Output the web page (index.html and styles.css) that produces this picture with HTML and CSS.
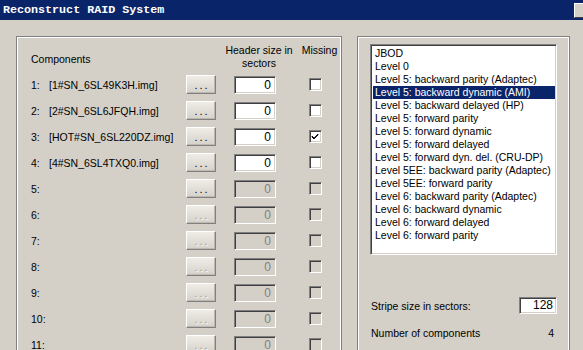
FILE: index.html
```html
<!DOCTYPE html>
<html lang="en">
  <head>
    <meta charset="UTF-8" />
    <title>Reconstruct RAID System</title>
    <link rel="stylesheet" href="styles.css">
  </head>
  <body>
    <div class="titlebar">
      <span class="title">Reconstruct RAID System</span>
      <span class="tb-btn"></span>
    </div>

    <div class="content">
      <div class="frame left-frame">
        <div class="head-row">
          <div class="comp-label">Components</div>
          <div class="hdr-cell hdr-text">Header size in<br />sectors</div>
          <div class="miss-cell">Missing</div>
        </div>

        <div class="row">
          <span class="num">1:</span>
          <span class="name">[1#SN_6SL49K3H.img]</span>
          <button class="browse">...</button>
          <div class="hdr-cell"><div class="edit">0</div></div>
          <div class="miss-cell"><span class="check"></span></div>
        </div>
        <div class="row">
          <span class="num">2:</span>
          <span class="name">[2#SN_6SL6JFQH.img]</span>
          <button class="browse">...</button>
          <div class="hdr-cell"><div class="edit">0</div></div>
          <div class="miss-cell"><span class="check"></span></div>
        </div>
        <div class="row">
          <span class="num">3:</span>
          <span class="name">[HOT#SN_6SL220DZ.img]</span>
          <button class="browse">...</button>
          <div class="hdr-cell"><div class="edit">0</div></div>
          <div class="miss-cell">
            <span class="check">
              <svg width="9" height="9" viewBox="0 0 9 9">
                <path d="M1 4 L3 6 L7 2 L7 3 L3 7 L1 5 Z M1 5 L3 7" fill="#000" stroke="#000" stroke-width="0.8" />
              </svg>
            </span>
          </div>
        </div>
        <div class="row">
          <span class="num">4:</span>
          <span class="name">[4#SN_6SL4TXQ0.img]</span>
          <button class="browse">...</button>
          <div class="hdr-cell"><div class="edit">0</div></div>
          <div class="miss-cell"><span class="check"></span></div>
        </div>
        <div class="row">
          <span class="num">5:</span>
          <span class="name"></span>
          <button class="browse">...</button>
          <div class="hdr-cell"><div class="edit off">0</div></div>
          <div class="miss-cell"><span class="check off"></span></div>
        </div>
        <div class="row">
          <span class="num">6:</span>
          <span class="name"></span>
          <button class="browse off">...</button>
          <div class="hdr-cell"><div class="edit off">0</div></div>
          <div class="miss-cell"><span class="check off"></span></div>
        </div>
        <div class="row">
          <span class="num">7:</span>
          <span class="name"></span>
          <button class="browse off">...</button>
          <div class="hdr-cell"><div class="edit off">0</div></div>
          <div class="miss-cell"><span class="check off"></span></div>
        </div>
        <div class="row">
          <span class="num">8:</span>
          <span class="name"></span>
          <button class="browse off">...</button>
          <div class="hdr-cell"><div class="edit off">0</div></div>
          <div class="miss-cell"><span class="check off"></span></div>
        </div>
        <div class="row">
          <span class="num">9:</span>
          <span class="name"></span>
          <button class="browse off">...</button>
          <div class="hdr-cell"><div class="edit off">0</div></div>
          <div class="miss-cell"><span class="check off"></span></div>
        </div>
        <div class="row">
          <span class="num">10:</span>
          <span class="name"></span>
          <button class="browse off">...</button>
          <div class="hdr-cell"><div class="edit off">0</div></div>
          <div class="miss-cell"><span class="check off"></span></div>
        </div>
        <div class="row">
          <span class="num">11:</span>
          <span class="name"></span>
          <button class="browse off">...</button>
          <div class="hdr-cell"><div class="edit off">0</div></div>
          <div class="miss-cell"><span class="check off"></span></div>
        </div>
      </div>

      <div class="frame right-frame">
        <ul class="listbox">
          <li>JBOD</li>
          <li>Level 0</li>
          <li>Level 5: backward parity (Adaptec)</li>
          <li class="selected">Level 5: backward dynamic (AMI)</li>
          <li>Level 5: backward delayed (HP)</li>
          <li>Level 5: forward parity</li>
          <li>Level 5: forward dynamic</li>
          <li>Level 5: forward delayed</li>
          <li>Level 5: forward dyn. del. (CRU-DP)</li>
          <li>Level 5EE: backward parity (Adaptec)</li>
          <li>Level 5EE: forward parity</li>
          <li>Level 6: backward parity (Adaptec)</li>
          <li>Level 6: backward dynamic</li>
          <li>Level 6: forward delayed</li>
          <li>Level 6: forward parity</li>
        </ul>

        <div class="param-row stripe-row">
          <span>Stripe size in sectors:</span>
          <div class="edit stripe-edit">128</div>
        </div>
        <div class="param-row">
          <span>Number of components</span>
          <span class="count">4</span>
        </div>
      </div>
    </div>
  </body>
</html>
```

FILE: styles.css
```css
* {
  margin: 0;
  padding: 0;
  box-sizing: border-box;
}

body {
  width: 583px;
  height: 350px;
  overflow: hidden;
  background: #d4d0c8;
  font-family: "Liberation Sans", Arial, sans-serif;
  font-size: 10.5px;
  color: #000;
}

.titlebar {
  height: 20px;
  background: #0a246a;
  display: flex;
  justify-content: space-between;
  align-items: flex-start;
  overflow: hidden;
}

.title {
  font-family: "Liberation Mono", "Courier New", monospace;
  font-weight: bold;
  font-size: 11.7px;
  color: #fff;
  padding: 3px 0 0 3px;
  line-height: 14px;
}

.tb-btn {
  width: 10px;
  height: 15px;
  margin-top: 3px;
  margin-right: -1px;
  background: #d4d0c8;
  border-top: 1px solid #fff;
  border-left: 1px solid #fff;
  border-bottom: 1px solid #404040;
}

.content {
  display: flex;
  gap: 15px;
  padding: 16px 0 0 16px;
}

.frame {
  height: 330px;
  border: 1px solid #808080;
  box-shadow: inset 1px 1px 0 #fff, inset -1px 0 0 #fff;
}

.left-frame {
  width: 326px;
  padding: 7px 0 0 14px;
}

.right-frame {
  width: 213px;
  padding: 7px 0 0 12px;
}

/* component table */
.head-row {
  display: flex;
  align-items: flex-start;
  height: 26px;
  margin-bottom: 5px;
  line-height: 13px;
}

.comp-label {
  width: 189px;
  padding-top: 9px;
}

.hdr-text {
  white-space: nowrap;
}

.row {
  display: flex;
  align-items: center;
  height: 19px;
  margin-bottom: 7px;
}

.num {
  width: 18px;
}

.name {
  width: 137px;
  white-space: nowrap;
}

.browse {
  width: 30px;
  height: 19px;
  font-family: "Liberation Sans", Arial, sans-serif;
  font-size: 11px;
  letter-spacing: 2px;
  padding-left: 2px;
  line-height: 12px;
  color: #000;
  background: linear-gradient(#efece6, #d6d2ca);
  border: 1px solid;
  border-color: #fff #808080 #808080 #fff;
  box-shadow: inset -1px -1px 0 #bdb9b1;
}

.browse.off {
  color: #a09c94;
  text-shadow: 1px 1px 0 #fff;
}

.hdr-cell {
  width: 70px;
  margin-left: 4px;
  text-align: center;
  display: flex;
  flex-direction: column;
  align-items: center;
}

.miss-cell {
  width: 35px;
  margin-left: 8px;
  display: flex;
  justify-content: center;
}

.edit {
  width: 42px;
  height: 18px;
  background: #fff;
  border: 1px solid;
  border-color: #808080 #fff #fff #808080;
  box-shadow: inset 1px 1px 0 #404040, inset -1px -1px 0 #d4d0c8;
  text-align: right;
  font-size: 12px;
  line-height: 16px;
  padding-right: 4px;
}

.edit.off {
  background: #d4d0c8;
  color: #808080;
}

.check {
  width: 13px;
  height: 13px;
  background: #fff;
  border: 1px solid;
  border-color: #808080 #fff #fff #808080;
  box-shadow: inset 1px 1px 0 #404040, inset -1px -1px 0 #d4d0c8;
  display: flex;
  align-items: center;
  justify-content: center;
}

.check.off {
  background: #d4d0c8;
}

/* raid type list */
.listbox {
  list-style: none;
  width: 187px;
  height: 211px;
  background: #fff;
  border: 1px solid;
  border-color: #808080 #fff #fff #808080;
  box-shadow: inset 1px 1px 0 #404040, inset -1px -1px 0 #d4d0c8;
  padding: 2px 1px 0 1px;
  line-height: 13px;
  white-space: nowrap;
  overflow: hidden;
}

.listbox li {
  padding-left: 2px;
  margin-left: 1px;
}

.listbox li.selected {
  background: #0a246a;
  color: #fff;
}

.param-row {
  width: 187px;
  display: flex;
  justify-content: space-between;
  align-items: center;
  height: 17px;
  padding-left: 1px;
}

.stripe-row {
  margin-top: 42px;
  margin-bottom: 10px;
}

.stripe-edit {
  width: 38px;
  height: 17px;
  font-size: 12px;
  line-height: 15px;
  padding-right: 3px;
}

.count {
  padding-right: 3px;
}
```
